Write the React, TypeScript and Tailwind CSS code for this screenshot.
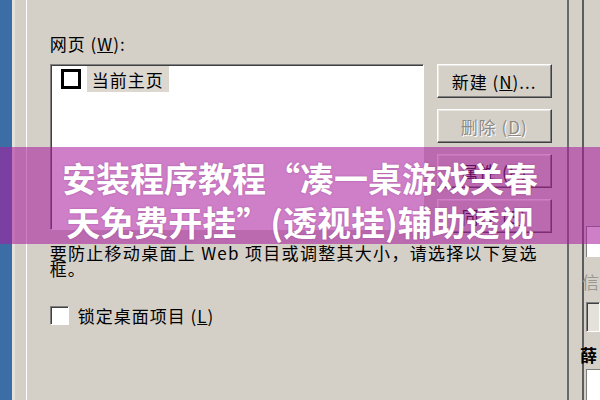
import type { ReactNode } from "react";

const raised =
  "border border-t-white border-l-white border-b-[#404040] border-r-[#404040] shadow-[inset_-1px_-1px_0_#808080,inset_1px_1px_0_#e9e7e2] bg-[#d4d0c8]";

const sunken =
  "border border-t-[#808080] border-l-[#808080] border-b-white border-r-white shadow-[inset_1px_1px_0_#404040]";

function ClassicButton({ children, disabled }: { children: ReactNode; disabled?: boolean }) {
  return (
    <div
      className={`h-[34px] w-[115px] flex items-center justify-center ${raised} ${
        disabled ? "text-[#8e8b85] [text-shadow:1px_1px_0_#ffffff]" : "text-black"
      }`}
    >
      {children}
    </div>
  );
}

export default function App() {
  return (
    <div className="relative w-[600px] h-[400px] overflow-hidden flex bg-[#d4d0c8] text-[17px] leading-[17px] tracking-[1px] font-['Noto_Sans_CJK_SC','Noto_Sans',sans-serif]">
      {/* desktop behind the dialog */}
      <div className="w-[12px] bg-[#3a6ea5]" />
      {/* window frame */}
      <div className="w-[14px] border-l-[3px] border-l-[#e4e1da]" />

      {/* tab page */}
      <div className="w-[552px] border-l border-l-white border-r-2 border-r-[#6a6a6a] pl-[23px] pt-[35px]">
        <div>
          网页 (<u>W</u>):
        </div>

        <div className="mt-[12px] flex gap-[13px]">
          <div className={`w-[374px] h-[166px] bg-white ${sunken} pl-[10px] pt-[1px]`}>
            <div className="flex items-center h-[26px]">
              <div className="w-[20px] h-[20px] border-[3px] border-black bg-white" />
              <div className="ml-[6px] h-[26px] px-[5px] flex items-center bg-[#dcd8d0]">当前主页</div>
            </div>
          </div>

          <div className="flex flex-col gap-[11px]">
            <ClassicButton>
              新建 (<u>N</u>)...
            </ClassicButton>
            <ClassicButton disabled>
              删除 (<u>D</u>)
            </ClassicButton>
            <ClassicButton>
              属性 (<u>P</u>)
            </ClassicButton>
            <ClassicButton>
              同步 (<u>S</u>)
            </ClassicButton>
          </div>
        </div>

        <div className="mt-[12px] leading-[16px]">
          <div className="whitespace-nowrap tracking-[1.3px]">要防止移动桌面上 Web 项目或调整其大小，请选择以下复选</div>
          <div>框。</div>
        </div>

        <div className="mt-[29px] flex items-center">
          <div className={`w-[19px] h-[19px] bg-white ${sunken}`} />
          <div className="ml-[9px]">
            锁定桌面项目 (<u>L</u>)
          </div>
        </div>
      </div>

      <div className="w-[13px]" />

      {/* edge of the next window */}
      <div className="flex-1 border-l-2 border-l-[#5c5c5c] flex flex-col pl-[2px]">
        <div className="h-[226px]" />
        <div className="h-[31px] bg-white border-l border-t border-[#808080]" />
        <div className="mt-[16px] text-[#9a9890] -ml-[4px]">信</div>
        <div className={`mt-[12px] h-[30px] bg-[#e4e1da] ${sunken}`} />
        <div className="mt-[14px] text-black -ml-[6px] font-bold">薛</div>
        <div className="mt-[6px] flex-1 bg-white border-l border-t border-[#808080]" />
      </div>

      {/* title banner laid over the dialog */}
      <div className="absolute inset-x-0 top-[147px] h-[97px] bg-[rgba(171,28,158,0.57)] pt-[9px] text-center text-white font-bold text-[34px] leading-[44px] tracking-normal [text-shadow:0_0_2px_rgba(90,10,80,0.35)]">
        <div className="whitespace-nowrap">安装程序教程“凑一桌游戏关春</div>
        <div className="whitespace-nowrap">天免费开挂”(透视挂)辅助透视</div>
      </div>
    </div>
  );
}
